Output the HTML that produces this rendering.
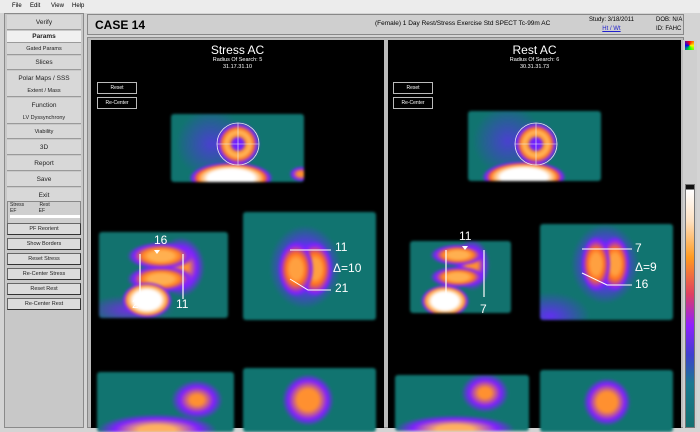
<!DOCTYPE html><html><head><style>
*{margin:0;padding:0;box-sizing:border-box}
body{width:700px;height:428px;overflow:hidden;background:#d4d4d4;font-family:"Liberation Sans",sans-serif;position:relative}
.a{position:absolute}
.mb{left:0;top:0;width:700px;height:13px;background:#ececec;font-size:6px}
.mb span{position:absolute;top:3px}
.side{left:4px;top:13px;width:80px;height:415px;background:#c8c8c8;border:1px solid #8a8a8a}
.it{position:absolute;left:2px;width:74px;background:#d8d8d8;border-bottom:1px solid #9a9a9a;font-size:6.5px;text-align:center;color:#222}
.bt{position:absolute;left:2px;width:74px;height:12px;background:#dcdcdc;border:1px solid #666;border-right-color:#333;border-bottom-color:#333;font-size:5.5px;text-align:center;line-height:11px;color:#222}
.hdr{left:87px;top:14px;width:597px;height:21px;background:#cfcfcf;border:1px solid #888}
.blk{background:#000}
.btn{position:absolute;width:40px;height:12px;border:1px solid #bbb;color:#fff;font-size:5px;text-align:center;line-height:10px}
.t{color:#fff;position:absolute;text-align:center}
.img{position:absolute;background:#117470;filter:blur(1.2px);border-radius:3px}
.n{position:absolute;color:#fff;font-size:12px}
</style></head><body>
<div class="a mb"><span style="left:12px">File</span><span style="left:30px">Edit</span><span style="left:51px">View</span><span style="left:72px">Help</span></div>
<div class="a side">
<div class="it" style="top:1px;height:15px;line-height:15px">Verify</div>
<div class="it" style="top:17px;height:12px;line-height:12px;background:#f0f0f0;font-weight:bold">Params</div>
<div class="it" style="top:29px;height:12px;line-height:12px;font-size:5.5px">Gated Params</div>
<div class="it" style="top:42px;height:14px;line-height:14px">Slices</div>
<div class="it" style="top:57px;height:26px;line-height:12px;padding-top:2px">Polar Maps / SSS<br><span style="font-size:5.5px">Extent / Mass</span></div>
<div class="it" style="top:84px;height:26px;line-height:12px;padding-top:2px">Function<br><span style="font-size:5.5px">LV Dyssynchrony</span></div>
<div class="it" style="top:111px;height:14px;line-height:14px;font-size:5.5px">Viability</div>
<div class="it" style="top:126px;height:15px;line-height:15px">3D</div>
<div class="it" style="top:142px;height:15px;line-height:15px">Report</div>
<div class="it" style="top:158px;height:15px;line-height:15px">Save</div>
<div class="it" style="top:174px;height:15px;line-height:15px">Exit</div>
<div class="it" style="top:187px;height:29px;background:#cfcfcf;text-align:left;font-size:5px;padding-left:2px;border:1px solid #888">Stress&nbsp;&nbsp;&nbsp;&nbsp;&nbsp;&nbsp;&nbsp;&nbsp;&nbsp;&nbsp;&nbsp;Rest<br>EF&nbsp;&nbsp;&nbsp;&nbsp;&nbsp;&nbsp;&nbsp;&nbsp;&nbsp;&nbsp;&nbsp;&nbsp;&nbsp;&nbsp;&nbsp;&nbsp;EF<div style="background:#fff;height:3px;margin-top:1px"></div></div>
<div class="bt" style="top:209px">PF Reorient</div>
<div class="bt" style="top:224px">Show Borders</div>
<div class="bt" style="top:239px">Reset Stress</div>
<div class="bt" style="top:254px">Re-Center Stress</div>
<div class="bt" style="top:269px">Reset Rest</div>
<div class="bt" style="top:284px">Re-Center Rest</div>
</div>
<div class="a hdr"><div style="position:absolute;left:7px;top:3px;font-size:12px;font-weight:bold">CASE 14</div>
<div style="position:absolute;left:287px;top:5px;font-size:6.5px">(Female) 1 Day Rest/Stress Exercise Std SPECT Tc-99m AC</div>
<div style="position:absolute;left:501px;top:1px;font-size:6px;text-align:center;line-height:9px">Study: 3/18/2011<br><span style="color:#22c;text-decoration:underline">Ht / Wt</span></div>
<div style="position:absolute;left:568px;top:1px;font-size:6px;line-height:9px">DOB: N/A<br>ID: FAHC</div></div>
<div class="a" style="left:87px;top:37px;width:597px;height:391px;background:#bbb;border:1px solid #888"></div>
<div class="a blk" style="left:91px;top:40px;width:293px;height:388px"></div>
<div class="a blk" style="left:388px;top:40px;width:293px;height:388px"></div>
<div class="a" style="left:683px;top:40px;width:14px;height:388px;background:#cfcfcf"></div>
<div class="a" style="left:685px;top:41px;width:9px;height:9px;background:conic-gradient(red,yellow,lime,blue,red)"></div>
<div class="a" style="left:685px;top:184px;width:10px;height:244px;background:linear-gradient(#111 0,#111 4px,#fff 5px,#fde0c0 15%,#ff9a20 30%,#e04060 45%,#9020ff 58%,#4040d0 70%,#1a7a90 82%,#137070 100%);border:1px solid #777"></div>
<!-- stress -->
<div class="t" style="left:91px;width:293px;top:43px;font-size:12px">Stress AC</div>
<div class="t" style="left:91px;width:293px;top:57px;font-size:5.5px;line-height:7px">Radius Of Search: 5<br>31.17.31.10</div>
<div class="btn" style="left:97px;top:82px">Reset</div><div class="btn" style="left:97px;top:97px">Re-Center</div>
<div class="img" style="left:171px;top:114px;width:133px;height:68px;background:radial-gradient(ellipse 42px 16px at 60px 64px,#fff 55%,#ffb060 72%,#ff7020 80%,#8020ff 90%,transparent 100%),radial-gradient(circle 22px at 67px 30px,#7020ff 25%,#ff9a30 38%,#ffb860 55%,#ff8020 70%,#8020ff 85%,transparent 100%),radial-gradient(ellipse 12px 8px at 130px 60px,#ff9030 30%,#8020ff 70%,transparent),radial-gradient(ellipse 35px 35px at 40px 30px,#4a40d0,transparent),#117470"></div>
<svg class="a" style="left:171px;top:114px" width="133" height="68"><circle cx="67" cy="30" r="21" fill="none" stroke="#eee" stroke-width=".8"/><path d="M46 30H88M67 9V51" stroke="#eee" stroke-width=".6"/></svg>
<div class="img" style="left:99px;top:232px;width:129px;height:86px;background:radial-gradient(ellipse 25px 18px at 48px 68px,#fff 55%,#ff9a30 80%,#8020ff 92%,transparent 100%),radial-gradient(ellipse 34px 14px at 62px 24px,#ffb050 35%,#ff8020 55%,#8020ff 80%,transparent),radial-gradient(ellipse 34px 14px at 62px 47px,#ffb050 35%,#ff8020 55%,#8020ff 80%,transparent),radial-gradient(ellipse 24px 30px at 82px 35px,#ff9030 30%,#8020ff 65%,transparent),radial-gradient(ellipse 45px 15px at 30px 78px,#7030e0,transparent),#12726e"></div>
<svg class="a" style="left:99px;top:232px" width="129" height="86"><path d="M41 22V67M84 22V67" stroke="#fff" stroke-width="1.2"/><path d="M55 18l3 4 3-4z" fill="#fff"/></svg>
<div class="n" style="left:154px;top:233px">16</div><div class="n" style="left:132px;top:297px">2</div><div class="n" style="left:176px;top:297px">11</div>
<div class="img" style="left:243px;top:212px;width:133px;height:108px;background:radial-gradient(ellipse 18px 28px at 53px 57px,#ffa040 35%,#ff7020 55%,#8020ff 85%,transparent),radial-gradient(ellipse 18px 28px at 72px 57px,#ffa040 35%,#ff7020 55%,#8020ff 85%,transparent),radial-gradient(ellipse 36px 42px at 62px 55px,#6030f0 50%,transparent),#117470"></div>
<svg class="a" style="left:243px;top:212px" width="133" height="108"><path d="M47 38H88M47 67l18 11H88" stroke="#fff" stroke-width="1" fill="none"/></svg>
<div class="n" style="left:335px;top:240px">11</div><div class="n" style="left:333px;top:261px">Δ=10</div><div class="n" style="left:335px;top:281px">21</div>
<div class="img" style="left:97px;top:372px;width:137px;height:60px;background:radial-gradient(ellipse 26px 20px at 100px 28px,#ff9030 25%,#8020ff 65%,transparent),radial-gradient(ellipse 60px 16px at 60px 58px,#ffb060 30%,#8020ff 70%,transparent),#117470"></div>
<div class="img" style="left:243px;top:368px;width:133px;height:64px;background:radial-gradient(ellipse 26px 26px at 65px 32px,#ff9030 40%,#8020ff 75%,transparent),#117470"></div>
<!-- rest -->
<div class="t" style="left:388px;width:293px;top:43px;font-size:12px">Rest AC</div>
<div class="t" style="left:388px;width:293px;top:57px;font-size:5.5px;line-height:7px">Radius Of Search: 6<br>30.31.31.73</div>
<div class="btn" style="left:393px;top:82px">Reset</div><div class="btn" style="left:393px;top:97px">Re-Center</div>
<div class="img" style="left:468px;top:111px;width:133px;height:70px;background:radial-gradient(ellipse 42px 16px at 56px 66px,#fff 55%,#ffb060 72%,#ff7020 80%,#8020ff 90%,transparent 100%),radial-gradient(circle 22px at 68px 33px,#7020ff 25%,#ff9a30 38%,#ffb860 55%,#ff8020 70%,#8020ff 85%,transparent 100%),radial-gradient(ellipse 35px 35px at 40px 30px,#4a40d0,transparent),#117470"></div>
<svg class="a" style="left:468px;top:111px" width="133" height="70"><circle cx="68" cy="33" r="21" fill="none" stroke="#eee" stroke-width=".8"/><path d="M47 33H89M68 12V54" stroke="#eee" stroke-width=".6"/></svg>
<div class="img" style="left:410px;top:241px;width:101px;height:72px;background:radial-gradient(ellipse 24px 16px at 35px 60px,#fff 55%,#ff9a30 80%,#8020ff 92%,transparent 100%),radial-gradient(ellipse 28px 11px at 48px 14px,#ffb050 35%,#ff8020 55%,#8020ff 80%,transparent),radial-gradient(ellipse 28px 11px at 48px 36px,#ffb050 35%,#ff8020 55%,#8020ff 80%,transparent),radial-gradient(ellipse 18px 26px at 62px 24px,#ff9030 30%,#8020ff 65%,transparent),#12726e"></div>
<svg class="a" style="left:410px;top:241px" width="101" height="72"><path d="M36 9V56M74 9V56" stroke="#fff" stroke-width="1.2"/><path d="M52 5l3 4 3-4z" fill="#fff"/></svg>
<div class="n" style="left:459px;top:229px">11</div><div class="n" style="left:480px;top:302px">7</div>
<div class="img" style="left:540px;top:224px;width:133px;height:96px;background:radial-gradient(ellipse 15px 28px at 56px 40px,#ffa040 35%,#ff7020 55%,#8020ff 85%,transparent),radial-gradient(ellipse 15px 28px at 75px 40px,#ffa040 35%,#ff7020 55%,#8020ff 85%,transparent),radial-gradient(ellipse 34px 40px at 65px 40px,#6030f0 50%,transparent),radial-gradient(ellipse 40px 24px at 10px 92px,#6030f0,transparent),#117470"></div>
<svg class="a" style="left:540px;top:224px" width="133" height="96"><path d="M42 25H92M42 49l25 12H92" stroke="#fff" stroke-width="1" fill="none"/></svg>
<div class="n" style="left:635px;top:241px">7</div><div class="n" style="left:635px;top:260px">Δ=9</div><div class="n" style="left:635px;top:277px">16</div>
<div class="img" style="left:395px;top:375px;width:134px;height:56px;background:radial-gradient(ellipse 24px 20px at 90px 18px,#ff9030 25%,#8020ff 65%,transparent),radial-gradient(ellipse 60px 14px at 60px 54px,#ffb060 30%,#8020ff 70%,transparent),#117470"></div>
<div class="img" style="left:540px;top:370px;width:133px;height:62px;background:radial-gradient(ellipse 24px 24px at 67px 32px,#ff9030 40%,#8020ff 75%,transparent),#117470"></div>
</body></html>
